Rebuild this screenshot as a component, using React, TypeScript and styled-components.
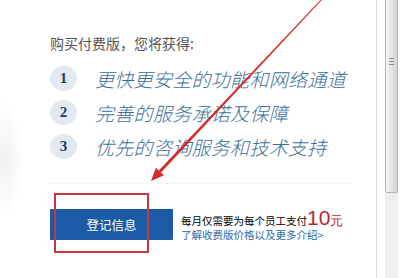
import React from 'react';
import styled, { createGlobalStyle } from 'styled-components';

const GlobalStyle = createGlobalStyle`
    body {
        margin: 0;
        background: #fff;
        font-family: 'Noto Sans CJK SC', 'Noto Sans', sans-serif;
    }
`;

const Frame = styled.div`
    display: flex;
    width: 403px;
    height: 278px;
    overflow: hidden;
    background: #fff;
`;

const Main = styled.div`
    position: relative;
    width: 377px;
    padding: 33px 0 0 50px;
    box-sizing: border-box;
    border-right: 1px solid #dcdcdc;
    background: radial-gradient(ellipse 20px 60px at 4px 160px, #f0f1f3, rgba(255, 255, 255, 0));
`;

const Title = styled.div`
    font-size: 14px;
    line-height: 20px;
    color: #555;
`;

const List = styled.div`
    display: flex;
    flex-direction: column;
    margin-top: 8px;
`;

const Row = styled.div`
    display: flex;
    align-items: center;
    height: 34px;
`;

const Badge = styled.div`
    width: 27px;
    height: 25px;
    border-radius: 50%;
    background: #e3e9f0;
    display: flex;
    align-items: center;
    justify-content: center;
    font-family: 'Liberation Serif', serif;
    font-weight: 700;
    font-size: 15px;
    color: #1c3d6b;
`;

const Feature = styled.div`
    margin-left: 18px;
    font-size: 19px;
    font-weight: 300;
    font-style: italic;
    color: #3a6f98;
    letter-spacing: 0.3px;
`;

const Separator = styled.div`
    width: 300px;
    margin-top: 20px;
    border-top: 1px dotted #ececec;
`;

const Footer = styled.div`
    display: flex;
    align-items: center;
    margin-top: 23px;
`;

const Button = styled.div`
    width: 123px;
    height: 31px;
    background: #1b5aa6;
    color: #fff;
    font-size: 12.5px;
    display: flex;
    align-items: center;
    justify-content: center;
    border-radius: 1px;
`;

const Info = styled.div`
    margin-left: 8px;
    display: flex;
    flex-direction: column;
`;

const Price = styled.div`
    display: flex;
    align-items: baseline;
    font-size: 10.5px;
    color: #000;
    height: 18px;
`;

const Amount = styled.span<{ $size: number }>`
    color: #c0272d;
    font-family: 'Liberation Sans', sans-serif;
    font-size: ${(p) => p.$size}px;
    line-height: 1;
`;

const MoreLink = styled.div`
    font-size: 10.5px;
    color: #2b6ca3;
    margin-top: 2px;
`;

const Highlight = styled.div`
    position: absolute;
    left: 54px;
    top: 193px;
    width: 95px;
    height: 60px;
    box-sizing: border-box;
    border: 2px solid #c8373d;
`;

const ArrowLayer = styled.svg`
    position: absolute;
    left: 0;
    top: 0;
    pointer-events: none;
`;

const ScrollColumn = styled.div`
    width: 25px;
    padding-left: 8px;
    box-sizing: border-box;
    display: flex;
    flex-direction: column;
`;

const Thumb = styled.div`
    width: 13px;
    height: 193px;
    box-sizing: border-box;
    border: 1px solid #b4b4b4;
    border-top: none;
    border-radius: 0 0 2px 2px;
    background: linear-gradient(to right, #f4f4f4, #e2e2e2 60%, #d4d4d4);
    display: flex;
    flex-direction: column;
    align-items: center;
    padding-top: 58px;
`;

const Grip = styled.div`
    width: 5px;
    height: 1px;
    background: #8a8a8a;
    margin-bottom: 2px;
`;

const Track = styled.div`
    flex: 1;
    width: 13px;
    background: #efefef;
`;

const features = ['更快更安全的功能和网络通道', '完善的服务承诺及保障', '优先的咨询服务和技术支持'];

export default function App() {
    return (
        <>
            <GlobalStyle />
            <Frame>
                <Main>
                    <Title>购买付费版，您将获得:</Title>
                    <List>
                        {features.map((text, i) => (
                            <Row key={i}>
                                <Badge>{i + 1}</Badge>
                                <Feature>{text}</Feature>
                            </Row>
                        ))}
                    </List>
                    <Separator />
                    <Footer>
                        <Button>登记信息</Button>
                        <Info>
                            <Price>
                                每月仅需要为每个员工支付
                                <Amount $size={21}>10</Amount>
                                <Amount $size={13}>元</Amount>
                            </Price>
                            <MoreLink>了解收费版价格以及更多介绍&gt;</MoreLink>
                        </Info>
                    </Footer>
                    <Highlight />
                    <ArrowLayer width="377" height="278" viewBox="0 0 377 278">
                        <polygon
                            points="323.4,-1.7 322.6,-2.3 158.8,170.5 161,172.5"
                            fill="#d42a2a"
                        />
                        <polygon points="151,181 163.9,175.3 155.9,167.7" fill="#d42a2a" />
                    </ArrowLayer>
                </Main>
                <ScrollColumn>
                    <Thumb>
                        <Grip />
                        <Grip />
                        <Grip />
                    </Thumb>
                    <Track />
                </ScrollColumn>
            </Frame>
        </>
    );
}
